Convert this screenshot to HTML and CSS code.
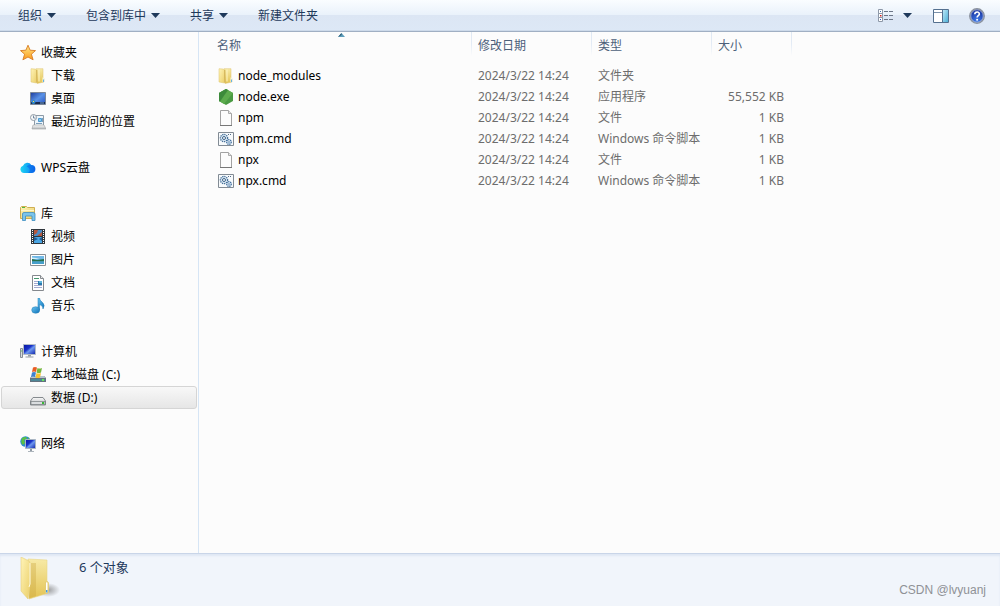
FILE: index.html
```html
<!DOCTYPE html>
<html lang="zh-CN">
<head>
<meta charset="utf-8">
<title>nodejs</title>
<link rel="stylesheet" href="styles.css">
</head>
<body>
<svg class="defs" aria-hidden="true">
  <defs>
    <linearGradient id="gold" x1="0" x2="1" y1="0" y2="1"><stop offset="0" stop-color="#fff4b8"/><stop offset="1" stop-color="#ebcf69"/></linearGradient>
    <linearGradient id="goldDark" x1="0" x2="0" y1="0" y2="1"><stop offset="0" stop-color="#f7eaa6"/><stop offset="1" stop-color="#e3c354"/></linearGradient>
    <linearGradient id="blue" x1="0" x2="1" y1="0" y2="1"><stop offset="0" stop-color="#1b3a9c"/><stop offset=".5" stop-color="#5a92e6"/><stop offset="1" stop-color="#2450c0"/></linearGradient>
    <linearGradient id="screen" x1="0" x2="1" y1="0" y2="1"><stop offset="0" stop-color="#0715a0"/><stop offset=".4" stop-color="#1a32c8"/><stop offset=".55" stop-color="#6f9af0"/><stop offset="1" stop-color="#0c1ea8"/></linearGradient>
    <linearGradient id="star" x1="0" x2="0" y1="0" y2="1"><stop offset="0" stop-color="#ffe98a"/><stop offset="1" stop-color="#fb9a1c"/></linearGradient>
    <linearGradient id="note" x1="0" x2="1" y1="0" y2="1"><stop offset="0" stop-color="#6cc6f2"/><stop offset="1" stop-color="#0b70b8"/></linearGradient>
    <linearGradient id="grey" x1="0" x2="0" y1="0" y2="1"><stop offset="0" stop-color="#fafafa"/><stop offset="1" stop-color="#b5b8bb"/></linearGradient>
    <linearGradient id="cloud" x1="0" x2="1" y1="0" y2="0"><stop offset="0" stop-color="#1ed6f2"/><stop offset=".6" stop-color="#119df5"/><stop offset="1" stop-color="#0a61ea"/></linearGradient>
    <linearGradient id="pane" x1="0" x2="1" y1="0" y2="1"><stop offset="0" stop-color="#b8e6f6"/><stop offset="1" stop-color="#4fb0d6"/></linearGradient>
    <radialGradient id="help" cx=".5" cy=".8" r=".8"><stop offset="0" stop-color="#3f7be8"/><stop offset="1" stop-color="#142a96"/></radialGradient>
    <radialGradient id="shadow"><stop offset="0" stop-color="#777" stop-opacity=".7"/><stop offset="1" stop-color="#777" stop-opacity="0"/></radialGradient>
    <symbol id="folder" viewBox="0 0 16 16">
      <path d="M6 .700h7v9l1 .8v3.500l-7 1.500z" fill="url(#goldDark)" stroke="#dcc370" stroke-width=".5"/>
      <path d="M1 .7l4 .3 1.500 1V15L1 14z" fill="url(#gold)" stroke="#dcc26a" stroke-width=".5"/>
      <path d="M6.800 2v12.500" stroke="#c9a545" stroke-width=".7"/>
      <path d="M9 1.500v12" stroke="#fff6c6"/>
      <path d="M12.500 9.500H14V14h-1.500z" fill="#f9f6df"/><path d="M13 11.500h1V14h-1z" fill="#62b3e8"/>
    </symbol>
    <symbol id="page" viewBox="0 0 16 16">
      <path d="M2.500.5h8l3 3v12h-11z" fill="#fcfcfc" stroke="#a2a2a2"/><path d="M10.500.5v3h3" fill="#e6e6e6" stroke="#aaa"/><path d="M2 15.500h12" stroke="#777"/>
    </symbol>
    <symbol id="cmd" viewBox="0 0 16 16">
      <path d="M.5 1.500h15v13H.5z" fill="#f7fafc" stroke="#828b94"/>
      <path d="M10 3.500h4" stroke="#526b88" stroke-dasharray="1 1"/>
      <circle cx="6" cy="7" r="3.600" fill="#dceaf5" stroke="#456f98" stroke-width="1.300" stroke-dasharray="1.300 .8"/><circle cx="6" cy="7" r="1.500" fill="#fff" stroke="#3c6489"/>
      <circle cx="11" cy="11" r="2.300" fill="#dceaf5" stroke="#376799" stroke-width="1.200" stroke-dasharray="1.200 .6"/><circle cx="11" cy="11" r=".7" fill="#376799"/>
    </symbol>
    <symbol id="down" viewBox="0 0 9 5"><path d="M0 0h9L4.500 5z" fill="#1e395b"/></symbol>
  </defs>
</svg>

<div class="explorer">
  <header class="toolbar">
    <button class="tool" type="button">组织<svg class="arrow"><use href="#down"/></svg></button>
    <button class="tool" type="button">包含到库中<svg class="arrow"><use href="#down"/></svg></button>
    <button class="tool" type="button">共享<svg class="arrow"><use href="#down"/></svg></button>
    <button class="tool" type="button">新建文件夹</button>
    <div class="view-tools">
      <button class="tool view-mode" type="button" aria-label="更改视图">
        <svg class="icon" viewBox="0 0 16 16"><g fill="#fff" stroke="#8d98a8"><path d="M.5 1.500h4v4h-4zM.5 5.500h4v4h-4zM.5 9.500h4v4h-4z"/></g><path d="M2 3h1v1H2z" fill="#3c6fa8"/><path d="M2 7h1.500v1.500H2z" fill="#d02020"/><path d="M2 11h1v1H2z" fill="#2b4fc0"/><path d="M6 3.500h4m1 0h4M6 7.500h4m1 0h4M6 11.500h4m1 0h4" stroke="#6c7687"/></svg>
        <svg class="arrow"><use href="#down"/></svg>
      </button>
      <button class="tool" type="button" aria-label="显示预览窗格">
        <svg class="icon" viewBox="0 0 16 16"><path d="M.5 1.500h15v13H.5z" fill="#fff" stroke="#54708f"/><path d="M1 4.500h9" stroke="#7c93ac"/><path d="M10 2h5v12h-5z" fill="url(#pane)"/><path d="M9.500 2v12" stroke="#54708f"/></svg>
      </button>
      <button class="tool" type="button" aria-label="获取帮助">
        <svg class="icon" viewBox="0 0 16 16"><circle cx="8" cy="8" r="7.200" fill="url(#help)" stroke="#8b929d" stroke-width="1.500"/><circle cx="8" cy="8" r="6.200" fill="none" stroke="#c9d3e6" stroke-width=".6"/><path d="M5.800 6.300c.1-3.200 4.700-3 4.500-.2-.1 1.500-2.200 1.600-2.200 3.400" fill="none" stroke="#fff" stroke-width="1.600"/><circle cx="8.100" cy="11.700" r="1" fill="#fff"/></svg>
      </button>
    </div>
  </header>

  <main class="body">
    <nav class="sidebar" aria-label="导航窗格">
      <ul class="group">
        <li><a class="place root" href="#"><svg class="icon" viewBox="0 0 16 16"><path d="M8 .2l2.100 5 5.400.4-4.100 3.600 1.700 5.600L8 12l-5.100 2.800 1.700-5.600L.5 5.600l5.400-.4z" fill="url(#star)" stroke="#d87b22" stroke-width=".9"/></svg>收藏夹</a></li>
        <li><a class="place" href="#"><svg class="icon"><use href="#folder"/></svg>下载</a></li>
        <li><a class="place" href="#"><svg class="icon" viewBox="0 0 16 16"><path d="M.5 1.500h15v12H.5z" fill="url(#blue)" stroke="#7b8798"/><path d="M1 11h14v2H1z" fill="#172c50"/><circle cx="3.500" cy="11" r="2" fill="#2f86c8"/><path d="M3 10h1v1H3z" fill="#ffe34a"/><path d="M10 12h4" stroke="#7aa0d0"/></svg>桌面</a></li>
        <li><a class="place" href="#"><svg class="icon" viewBox="0 0 16 16"><path d="M4.500 1.500h9v11h-9z" fill="#edf5fb" stroke="#8d9aa6"/><path d="M8.500 4.500h3v3h-3z" fill="#8cc5ee" stroke="#4c9bd0"/><path d="M6 9.500h6M12.500 4v4" stroke="#7e9db7"/><path d="M3 11h11l2 4H2z" fill="url(#grey)" stroke="#9a9da0" stroke-width=".6"/><circle cx="3.500" cy="3.500" r="3" fill="#f6f8fa" stroke="#939da6"/><path d="M3.500 1.500v2.500h2" fill="none" stroke="#55708a" stroke-width=".8"/></svg>最近访问的位置</a></li>
      </ul>
      <ul class="group">
        <li><a class="place root" href="#"><svg class="icon" viewBox="0 0 16 16"><path d="M4.500 13A3.700 3.700 0 013 5.800 4.600 4.600 0 0111.300 5 4 4 0 0111.500 13z" fill="url(#cloud)"/><path d="M6.500 6.500Q9 3.500 12 5.300A4 4 0 0111.500 13H8c3-2 2-5.500-1.500-6.500z" fill="#0a65e8" opacity=".6"/></svg>WPS云盘</a></li>
      </ul>
      <ul class="group">
        <li><a class="place root" href="#"><svg class="icon" viewBox="0 0 16 16"><path d="M.5 1.500l1-1h5l1 1h7v11H.5z" fill="url(#gold)" stroke="#cfae52"/><path d="M2 1.500h3" stroke="#52b841"/><path d="M1 4.500h13" stroke="#fff6c9"/><path d="M2.500 14.500V8q0-1.500 1.500-1.500h9q2 0 2 1.500v6.500h-3V10H5.500v4.500z" fill="#7cc4ea" stroke="#3e8dbf" stroke-width=".8"/></svg>库</a></li>
        <li><a class="place" href="#"><svg class="icon" viewBox="0 0 16 16"><path d="M1 0h14v15H1z" fill="#30363c"/><path d="M4 1h8v6H4z" fill="#4c8cc6"/><path d="M4 8h8v6H4z" fill="#4aa6e4"/><path d="M4 1h4l-1 3-3 2zM12 3v4H7z" fill="#b4573c"/><path d="M4 8l4 2-4 2zM12 8v4l-3-2z" fill="#225b94"/><path d="M2.500 1v13M13.500 1v13" stroke="#fff" stroke-dasharray="1 1"/></svg>视频</a></li>
        <li><a class="place" href="#"><svg class="icon" viewBox="0 0 16 16"><path d="M.5 2.500h15v11H.5z" fill="#fff" stroke="#8a8f94"/><path d="M2 4h12v8H2z" fill="#71b9e8"/><path d="M2 5.500q4 0 8 1.500H2z" fill="#d7eef9"/><path d="M2 7l5 1 7-1v2.500H2z" fill="#26704b"/><path d="M2 9.500h12V12H2z" fill="#459fcb"/></svg>图片</a></li>
        <li><a class="place" href="#"><svg class="icon" viewBox="0 0 16 16"><path d="M2.500.5h8l3 3v12h-11z" fill="#fff" stroke="#85898e"/><path d="M10.500.5v3h3" fill="#e9e9e9" stroke="#85898e"/><path d="M4 3.500h5" stroke="#44976c"/><path d="M4 6.500h4M4 8.500h4M4 10.500h8M4 12.500h8" stroke="#a4abd0"/><path d="M8 6h4v4H8z" fill="#2a7bae"/><path d="M9 6h3v2H9z" fill="#5db6dc"/></svg>文档</a></li>
        <li><a class="place" href="#"><svg class="icon" viewBox="0 0 16 16"><path d="M8 0h1.500q0 2.500 3 4.500Q15.500 7 13 11q.2-3.500-3.500-4.500V12H8z" fill="url(#note)" stroke="#1b78b4" stroke-width=".5"/><ellipse cx="5.700" cy="12" rx="4" ry="3.300" fill="url(#note)" stroke="#277fb5" stroke-width=".5"/></svg>音乐</a></li>
      </ul>
      <ul class="group">
        <li><a class="place root" href="#"><svg class="icon" viewBox="0 0 16 16"><path d="M.5 4.500h2v9h-2z" fill="#d9dde0" stroke="#878f96"/><path d="M1 7h1" stroke="#54bb53"/><path d="M3.500.5h12v10h-12z" fill="url(#screen)" stroke="#b3bcc6"/><path d="M8 11h3v2H8z" fill="#999fa5"/><path d="M5.500 13h8" stroke="#b7bcc1" stroke-width="1.500"/></svg>计算机</a></li>
        <li><a class="place" href="#"><svg class="icon" viewBox="0 0 16 16"><path d="M2 9h12l2 2v4H0v-4z" fill="#65727e"/><path d="M2 9h12l1.500 2H.5z" fill="#b9c5cf"/><path d="M1 12h14v2H1z" fill="#4d8797"/><path d="M12 12h2v2h-2z" fill="#67e35a"/><path d="M3 .5q2-1 4 0L6 5Q4 4 2 5z" fill="#e85d24"/><path d="M7.500 1q2 1 4.500 0l-1 4.500q-2 1-4.500 0z" fill="#75b63c"/><path d="M2 5.500q2-1 4 0l-1 4.500q-2-1-4 0z" fill="#3f82cf"/><path d="M6.500 6q2 1 4.500 0l-1 4.500q-2 1-4.500 0z" fill="#f7c22e"/></svg>本地磁盘 (C:)</a></li>
        <li><a class="place selected" href="#" aria-current="true"><svg class="icon" viewBox="0 0 16 16"><path d="M.5 11L3 7.500h10l2.500 3.500v4H.5z" fill="url(#grey)" stroke="#858a8e"/><path d="M1 11.500h14v3H1z" fill="#dadddf" stroke="#777c80" stroke-width=".7"/><path d="M12 12h2v2h-2z" fill="#39b936"/></svg>数据 (D:)</a></li>
      </ul>
      <ul class="group">
        <li><a class="place root" href="#"><svg class="icon" viewBox="0 0 16 16"><circle cx="5.500" cy="5.500" r="5.200" fill="#2b8bd0"/><path d="M2 2q4-2 5 0-1 2-3 2l1 3-2 2Q0 7 2 2zM8 1l2 3-2 1z" fill="#5bc143"/><path d="M5.500 3.500h10v9h-10z" fill="url(#screen)" stroke="#a9b5c2"/><path d="M10 13h2v2h-2z" fill="#929ca6"/><path d="M8 15.500h6" stroke="#adb5bc"/></svg>网络</a></li>
      </ul>
    </nav>

    <section class="files" aria-label="文件列表">
      <table class="list">
        <colgroup><col class="c-name"><col class="c-date"><col class="c-type"><col class="c-size"></colgroup>
        <thead>
          <tr><th>名称<svg class="sort" viewBox="0 0 7 4"><path d="M0 4h7L3.500 0z" fill="#5d9dba"/><path d="M0 4l3.500-4v2z" fill="#23506b"/></svg></th><th>修改日期</th><th>类型</th><th>大小</th></tr>
        </thead>
        <tbody>
          <tr><td><span class="file"><svg class="icon"><use href="#folder"/></svg>node_modules</span></td><td>2024/3/22 14:24</td><td>文件夹</td><td></td></tr>
          <tr><td><span class="file"><svg class="icon" viewBox="0 0 16 16"><path d="M8 0l7 4v8l-7 4-7-4V4z" fill="#4a9a43"/><path d="M8 0l7 4-9 11-5-3V4z" fill="#5cab4d"/><path d="M1 4l7-4 2 1-8 11.500-1-.5z" fill="#3c8a3b"/></svg>node.exe</span></td><td>2024/3/22 14:24</td><td>应用程序</td><td>55,552 KB</td></tr>
          <tr><td><span class="file"><svg class="icon"><use href="#page"/></svg>npm</span></td><td>2024/3/22 14:24</td><td>文件</td><td>1 KB</td></tr>
          <tr><td><span class="file"><svg class="icon"><use href="#cmd"/></svg>npm.cmd</span></td><td>2024/3/22 14:24</td><td>Windows 命令脚本</td><td>1 KB</td></tr>
          <tr><td><span class="file"><svg class="icon"><use href="#page"/></svg>npx</span></td><td>2024/3/22 14:24</td><td>文件</td><td>1 KB</td></tr>
          <tr><td><span class="file"><svg class="icon"><use href="#cmd"/></svg>npx.cmd</span></td><td>2024/3/22 14:24</td><td>Windows 命令脚本</td><td>1 KB</td></tr>
        </tbody>
      </table>
    </section>
  </main>

  <footer class="details">
    <svg class="big-folder" viewBox="0 0 40 44">
      <ellipse cx="28" cy="33" rx="12" ry="7" fill="url(#shadow)"/>
      <path d="M8 2l19 1v21l1.500 1.500V36L9 42z" fill="url(#goldDark)" stroke="#ead788" stroke-width=".6"/>
      <path d="M10 6v22l-1 13 7-2V6z" fill="#c9a23c" opacity=".35"/>
      <path d="M1 0l8 4 1 2v21l-2 15-7-8z" fill="url(#gold)" stroke="#e6cf7c" stroke-width=".6"/>
      <path d="M10 6v21l-1 3" fill="none" stroke="#fffbe0"/>
      <path d="M25.500 25q2.500-1 2.500 1v9.500q-1.500 1.500-2.500 0z" fill="#fff" stroke="#e0c566" stroke-width=".8"/><path d="M26 33h1.500v2.500H26z" fill="#429ce0"/>
    </svg>
    <p class="count">6 个对象</p>
    <p class="credit">CSDN @lvyuanj</p>
  </footer>
</div>
</body>
</html>
```
FILE: styles.css
```css
* { box-sizing: border-box; }

body {
  margin: 0;
  background: #fcfcfc;
  color: #000;
  font: 12px/20px "Noto Sans", "Noto Sans CJK SC", sans-serif;
}

.defs { position: absolute; width: 0; height: 0; }

.explorer {
  display: flex;
  flex-direction: column;
  min-height: 100vh;
}

.icon { width: 16px; height: 16px; flex: none; display: block; }
.arrow { width: 9px; height: 5px; flex: none; display: block; }

/* Toolbar */
.toolbar {
  display: flex;
  align-items: center;
  gap: 30px;
  height: 32px;
  padding: 0 15px 0 18px;
  border-bottom: 1px solid #a0afc3;
  box-shadow: inset 0 -1px #cddaea;
  background: linear-gradient(#fafdff, #eaf2fb 47%, #dce6f4 50%, #dde8f6);
}

.tool {
  display: flex;
  align-items: center;
  gap: 5px;
  padding: 0;
  border: 0;
  background: none;
  color: #1e395b;
  font: inherit;
}

.view-tools { display: flex; align-items: center; gap: 20px; margin-left: auto; }
.view-mode { gap: 9px; padding-right: 1px; }

/* Body */
.body { display: flex; flex: 1; }

.sidebar {
  flex: none;
  width: 199px;
  padding: 9px 1px;
  border-right: 1px solid #d6e5f5;
}

.group { margin: 0 0 23px; padding: 0; list-style: none; }
.group:last-child { margin-bottom: 0; }

.place {
  display: flex;
  align-items: center;
  gap: 5px;
  height: 23px;
  padding-left: 28px;
  border: 1px solid transparent;
  border-radius: 3px;
  color: inherit;
  text-decoration: none;
}
.place.root { padding-left: 18px; }
.place.selected {
  border-color: #d5d5d5;
  background: linear-gradient(#f8f8f8, #e6e6e6);
}

/* File list */
.files { flex: 1; min-width: 0; padding-left: 13px; }

.list { width: 580px; table-layout: fixed; border-collapse: collapse; }
.c-name { width: 260px; }
.c-date, .c-type { width: 120px; }
.c-size { width: 80px; }

th {
  position: relative;
  height: 33px;
  padding: 0 6px 6px;
  color: #4c607a;
  font-weight: 400;
  text-align: left;
  background: linear-gradient(#dfe8f3, #e3ebf5 50%, #fcfcfc) right top / 1px 24px no-repeat;
}
th:first-child { padding-left: 5px; }

.sort {
  position: absolute;
  top: 1px;
  left: calc(50% - 4px);
  width: 7px;
  height: 4px;
}

td { height: 21px; padding: 0 8px 0 6px; color: #6d6d6d; white-space: nowrap; line-height: 20px; }
td:last-child { text-align: right; }
.file { display: flex; align-items: center; gap: 4px; color: #000; }

/* Details pane */
.details {
  display: flex;
  align-items: flex-start;
  height: 53px;
  padding: 3px 14px 0 20px;
  border-top: 1px solid #c9d5e8;
  box-shadow: inset 0 2px 2px #dfe7f4;
  background: #f1f5fb;
}

.big-folder { width: 40px; height: 44px; flex: none; }
.count { margin: 0 0 0 19px; color: #1e395b; font-size: 13px; }
.credit {
  align-self: flex-end;
  margin: 0 0 6px auto;
  color: #8f9196;
  font: 12px/20px "Liberation Sans", Arial, sans-serif;
}
```
